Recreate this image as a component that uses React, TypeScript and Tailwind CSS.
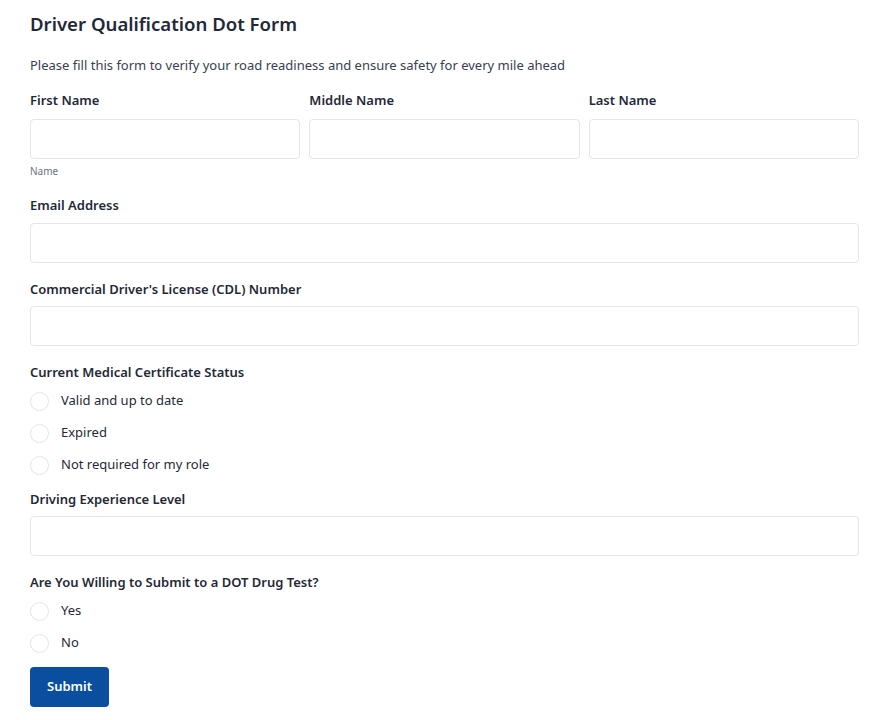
const labelCls = 'block text-[13px] font-semibold text-[#1f2937] leading-none'
const inputCls = 'block w-full h-10 rounded border border-[#e3e5e8] bg-white'

function Radio({ label }: { label: string }) {
  return (
    <label className="flex items-center h-8 gap-3 text-[13px] text-[#1f2937]">
      <span className="w-[19px] h-[19px] rounded-full border border-[#e3e5e8] bg-white shrink-0" />
      <span>{label}</span>
    </label>
  )
}

export default function App() {
  return (
    <div className="min-h-screen bg-white font-['Noto_Sans','Open_Sans',sans-serif] pl-[30px] w-[859px] pb-4">
      <h1 className="pt-[13px] text-[18.6px] font-semibold text-[#1f2937] leading-[22px]">Driver Qualification Dot Form</h1>
      <p className="mt-[24px] text-[13px] text-[#374151] leading-none">
        Please fill this form to verify your road readiness and ensure safety for every mile ahead
      </p>

      <div className="mt-[22px] grid grid-cols-3 gap-[9px]">
        <div>
          <span className={labelCls}>First Name</span>
          <input className={inputCls + ' mt-[12px]'} />
        </div>
        <div>
          <span className={labelCls}>Middle Name</span>
          <input className={inputCls + ' mt-[12px]'} />
        </div>
        <div>
          <span className={labelCls}>Last Name</span>
          <input className={inputCls + ' mt-[12px]'} />
        </div>
      </div>
      <div className="mt-[7px] text-[10px] text-[#6b7280] leading-none">Name</div>

      <div className="mt-[23px]">
        <span className={labelCls}>Email Address</span>
        <input className={inputCls + ' mt-[11px]'} />
      </div>

      <div className="mt-[20px]">
        <span className={labelCls}>Commercial Driver's License (CDL) Number</span>
        <input className={inputCls + ' mt-[10px]'} />
      </div>

      <div className="mt-[20px]">
        <span className={labelCls}>Current Medical Certificate Status</span>
        <div className="mt-[6px]">
          <Radio label="Valid and up to date" />
          <Radio label="Expired" />
          <Radio label="Not required for my role" />
        </div>
      </div>

      <div className="mt-[12px]">
        <span className={labelCls}>Driving Experience Level</span>
        <input className={inputCls + ' mt-[10px]'} />
      </div>

      <div className="mt-[20px]">
        <span className={labelCls}>Are You Willing to Submit to a DOT Drug Test?</span>
        <div className="mt-[6px]">
          <Radio label="Yes" />
          <Radio label="No" />
        </div>
      </div>

      <button className="mt-[8px] h-10 w-[79px] rounded bg-[#0a4f9f] text-white text-[13px] font-semibold">Submit</button>
    </div>
  )
}
